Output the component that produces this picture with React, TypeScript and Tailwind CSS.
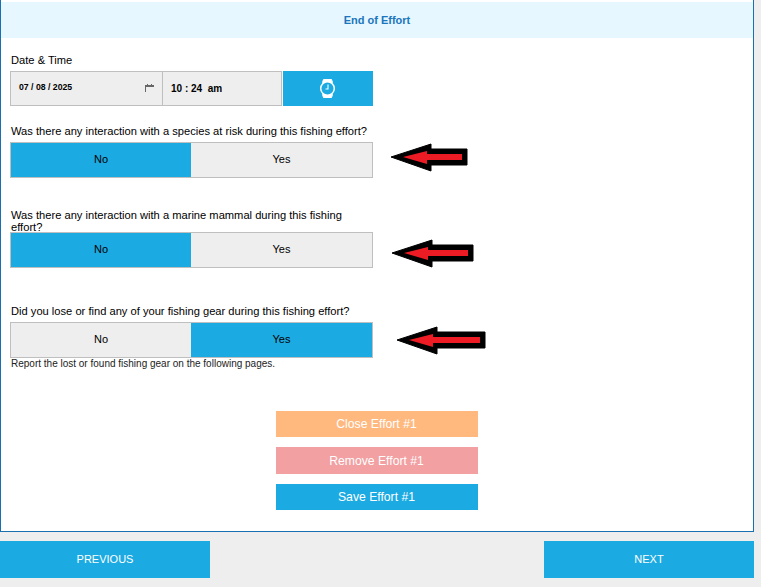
const arrows = [
  { top: 'top-[143px]', left: 'left-[390px]', width: 78 },
  { top: 'top-[239px]', left: 'left-[391px]', width: 83 },
  { top: 'top-[326px]', left: 'left-[396px]', width: 90 },
];

function Arrow({ top, left, width }: { top: string; left: string; width: number }) {
  const end = width - 1;
  const head = 41;
  return (
    <svg className={`absolute ${top} ${left}`} width={width} height={29} viewBox={`0 0 ${width} 29`}>
      <path
        d={`M1 14 L${head} 1 L${head} 6 L${end} 6 L${end} 22 L${head} 22 L${head} 28 Z`}
        fill="#000"
        stroke="#000"
        strokeLinejoin="round"
      />
      <path
        d={`M13 14 L${head - 4} 8 L${head - 4} 11 L${end - 5} 11 L${end - 5} 17 L${head - 4} 17 L${head - 4} 21 Z`}
        fill="#ed1c24"
      />
    </svg>
  );
}

function Toggle({ selected }: { selected: 'No' | 'Yes' }) {
  return (
    <div className="flex h-9 w-[363px] border border-[#bfbfbf] bg-[#eeeeee] text-[11px] text-black">
      {['No', 'Yes'].map((option) => (
        <div
          key={option}
          className={`flex items-center justify-center pb-[2px] ${option === 'No' ? 'w-[180px]' : 'flex-1'} ${selected === option ? 'bg-[#1caae2]' : ''}`}
        >
          {option}
        </div>
      ))}
    </div>
  );
}

export default function App() {
  return (
    <div className="relative flex h-[587px] w-[761px] flex-col overflow-hidden bg-[#eeeeee] font-['Liberation_Sans',Arial,sans-serif]">
      {/* Panel */}
      <div className="h-[532px] w-[754px] border border-t-0 border-[#1a6fb0] bg-white pt-[2px]">
        <div className="flex h-9 items-center justify-center bg-[#e7f7ff] text-[11px] font-bold text-[#1a76bd]">
          End of Effort
        </div>

        <div className="flex flex-col pl-[9px]">
          <div className="mt-4 h-[17px] pl-px text-[11.15px] leading-[13px] text-black">Date &amp; Time</div>
          <div className="flex h-[35px] w-[363px]">
            <div className="flex w-[153px] items-center justify-between border border-[#bfbfbf] bg-[#eeeeee] pl-2 pr-2 text-[8.7px] font-bold text-black">
              <span className="mb-px">07 / 08 / 2025</span>
              <svg width="9" height="8" viewBox="0 0 9 8" className="mb-0.5">
                <path d="M0 1 H2 V0 H3 V1 H6 V0 H7 V1 H9 V3 H1 V8 H0 Z" fill="#666" />
              </svg>
            </div>
            <div className="flex w-[119px] items-center whitespace-pre border border-l-0 border-[#bfbfbf] bg-[#eeeeee] pl-2 text-[10px] font-bold text-black">
              {'10 : 24  am'}
            </div>
            <div className="ml-[1px] flex flex-1 items-center justify-center bg-[#1caae2]">
              <svg width="17" height="19" viewBox="0 0 17 19" fill="none" stroke="#fff" className="mr-[2px]">
                <path d="M3.5 3.5 L4.5 .5 H12.5 L13.5 3.5 Z M3.5 15.5 L4.5 18.5 H12.5 L13.5 15.5 Z" fill="#fff" strokeWidth="1" />
                <circle cx="8.5" cy="9.5" r="6.8" fill="#1caae2" strokeWidth="1.5" />
                <path d="M9 5.5 V10 H6.5" strokeWidth="1.1" />
              </svg>
            </div>
          </div>

          <div className="mt-[19px] h-[17px] pl-px text-[11.15px] leading-[13px] text-black">
            Was there any interaction with a species at risk during this fishing effort?
          </div>
          <Toggle selected="No" />

          <div className="mt-[31px] h-[23px] w-[363px] pl-px pr-5 text-[11.15px] leading-[12px] text-black">
            Was there any interaction with a marine mammal during this fishing effort?
          </div>
          <Toggle selected="No" />

          <div className="mt-[37px] h-[17px] pl-px text-[11.15px] leading-[13px] text-black">
            Did you lose or find any of your fishing gear during this fishing effort?
          </div>
          <Toggle selected="Yes" />
          <div className="pl-px text-[10px] leading-[12px] text-[#222222]">
            Report the lost or found fishing gear on the following pages.
          </div>
        </div>

        <div className="mt-[41px] flex flex-col items-center gap-[10px] pr-[1px] text-[12.2px] text-white">
          <div className="flex h-[26px] w-[202px] items-center justify-center bg-[#ffb97f]">Close Effort #1</div>
          <div className="flex h-[27px] w-[202px] items-center justify-center bg-[#f2a0a2] pt-px">Remove Effort #1</div>
          <div className="flex h-[26px] w-[202px] items-center justify-center bg-[#1caae2]">Save Effort #1</div>
        </div>
      </div>

      {/* Footer nav */}
      <div className="mt-[9px] flex w-[754px] justify-between text-[11px] text-white">
        <div className="flex h-[37px] w-[210px] items-center justify-center bg-[#1caae2]">PREVIOUS</div>
        <div className="flex h-[37px] w-[210px] items-center justify-center bg-[#1caae2]">NEXT</div>
      </div>

      {arrows.map((arrow) => (
        <Arrow key={arrow.top} {...arrow} />
      ))}
    </div>
  );
}
